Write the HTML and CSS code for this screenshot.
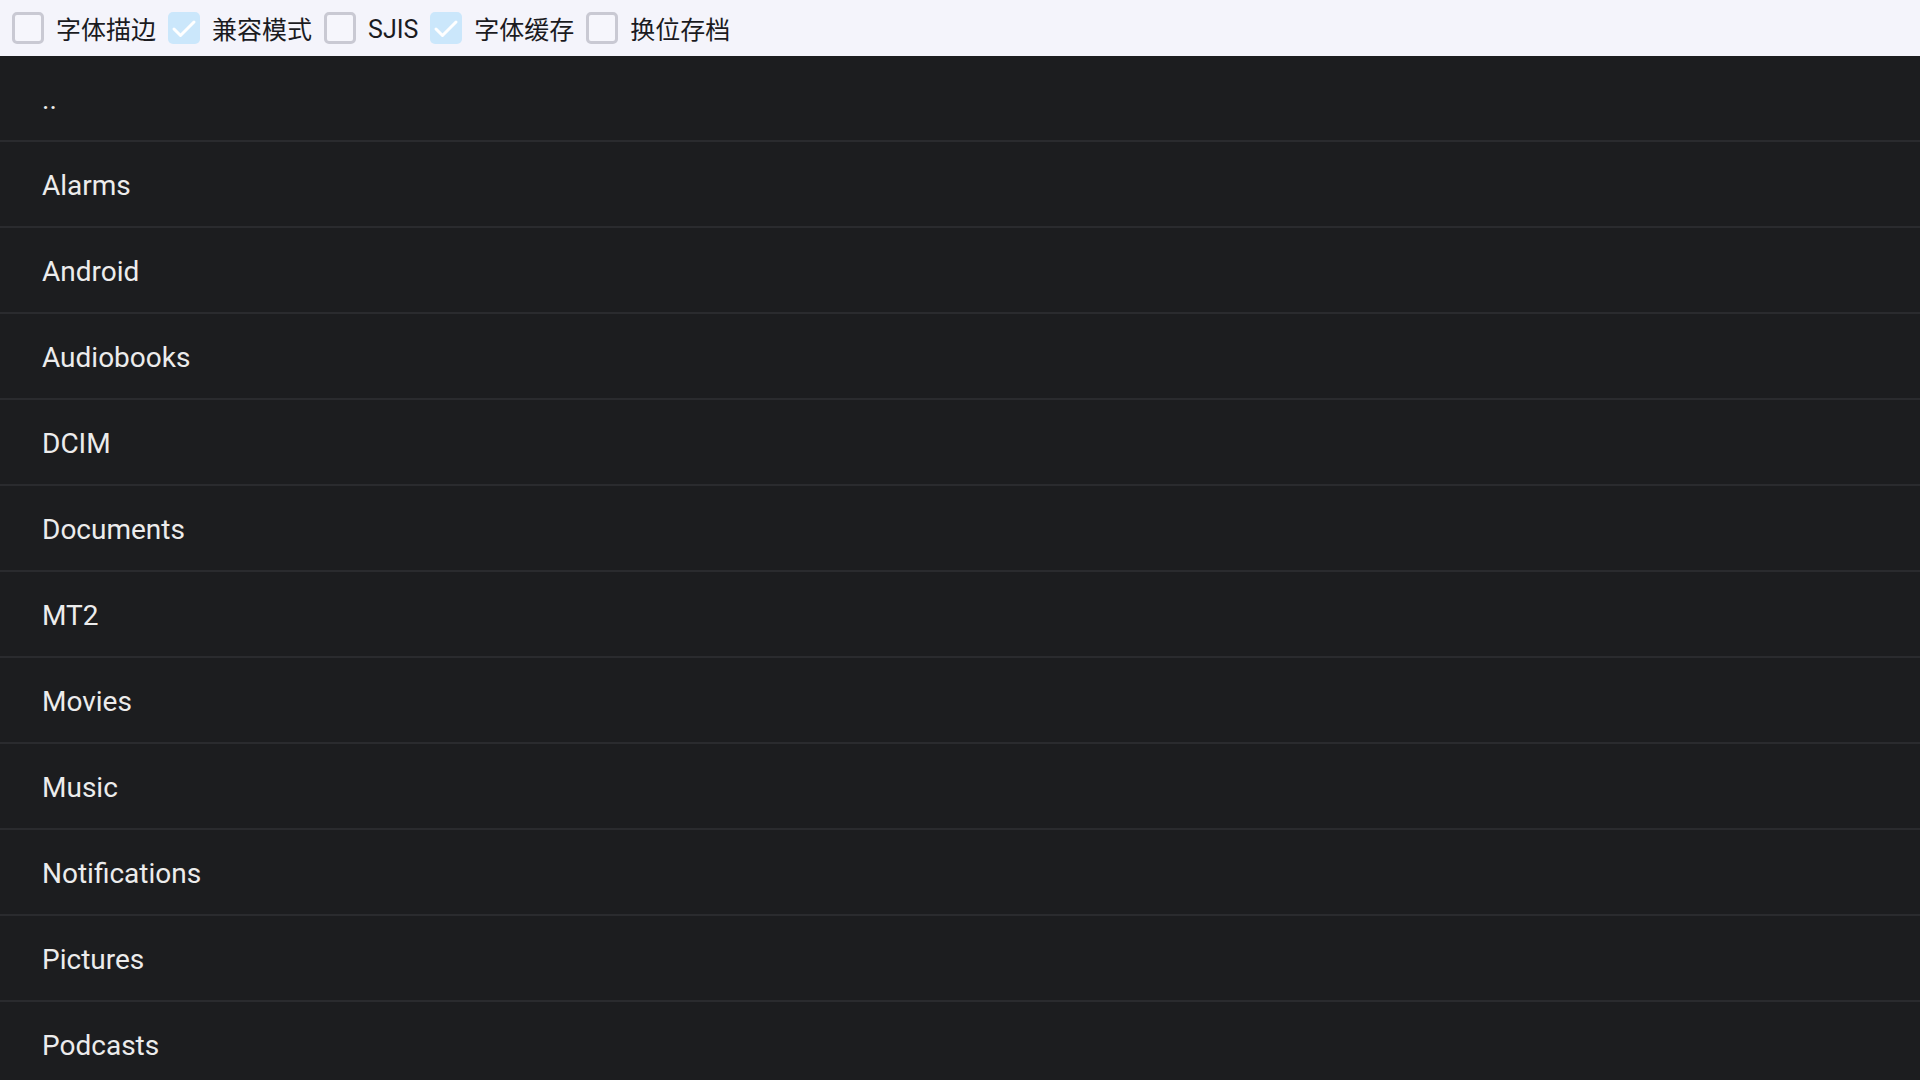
FILE: index.html
```html
<!DOCTYPE html>
<html lang="zh-CN">
<head>
<meta charset="utf-8">
<title>File browser</title>
<link rel="stylesheet" href="styles.css">
</head>
<body>
<header class="toolbar">
  <label class="opt"><span class="box"></span><span class="lbl">字体描边</span></label>
  <label class="opt"><span class="box checked"><svg viewBox="0 0 32 32" class="tick"><path d="M6 17 L12.5 23.5 L26 10" /></svg></span><span class="lbl">兼容模式</span></label>
  <label class="opt"><span class="box"></span><span class="lbl latin">SJIS</span></label>
  <label class="opt"><span class="box checked"><svg viewBox="0 0 32 32" class="tick"><path d="M6 17 L12.5 23.5 L26 10" /></svg></span><span class="lbl">字体缓存</span></label>
  <label class="opt"><span class="box"></span><span class="lbl">换位存档</span></label>
</header>
<ul class="list">
  <li class="row">..</li>
  <li class="row">Alarms</li>
  <li class="row">Android</li>
  <li class="row">Audiobooks</li>
  <li class="row">DCIM</li>
  <li class="row">Documents</li>
  <li class="row">MT2</li>
  <li class="row">Movies</li>
  <li class="row">Music</li>
  <li class="row">Notifications</li>
  <li class="row">Pictures</li>
  <li class="row">Podcasts</li>
</ul>
</body>
</html>
```

FILE: styles.css
```css
html, body {
  margin: 0;
  padding: 0;
}
body {
  width: 1920px;
  height: 1080px;
  overflow: hidden;
  background: #1c1d1f;
  font-family: Roboto, "Noto Sans CJK SC", sans-serif;
}
.toolbar {
  height: 56px;
  background: #f4f4fb;
  display: flex;
  align-items: center;
  box-sizing: border-box;
}
.opt {
  display: flex;
  align-items: center;
}
.box {
  width: 32px;
  height: 32px;
  box-sizing: border-box;
  margin: 0 12px;
  border: 3px solid #c9c9d3;
  border-radius: 5px;
  background: #f6f6fc;
  display: flex;
  align-items: center;
  justify-content: center;
}
.box.checked {
  border: none;
  background: #cbe7fb;
}
.tick {
  width: 32px;
  height: 32px;
}
.tick path {
  fill: none;
  stroke: #ffffff;
  stroke-width: 3;
  stroke-linecap: round;
  stroke-linejoin: round;
}
.lbl {
  font-family: "Noto Sans CJK SC", Roboto, sans-serif;
  font-size: 25px;
  color: #1b1b1f;
  line-height: 1;
  padding-top: 1px;
}
.lbl.latin {
  font-family: Roboto, "Noto Sans CJK SC", sans-serif;
  font-size: 25px;
  padding-top: 3px;
}
.list {
  list-style: none;
  margin: 0;
  padding: 0;
}
.row {
  box-sizing: border-box;
  height: 86px;
  padding-top: 2px;
  border-bottom: 2px solid #2a2b2e;
  display: flex;
  align-items: center;
  padding-left: 42px;
  font-size: 28px;
  color: #ececec;
}
```
